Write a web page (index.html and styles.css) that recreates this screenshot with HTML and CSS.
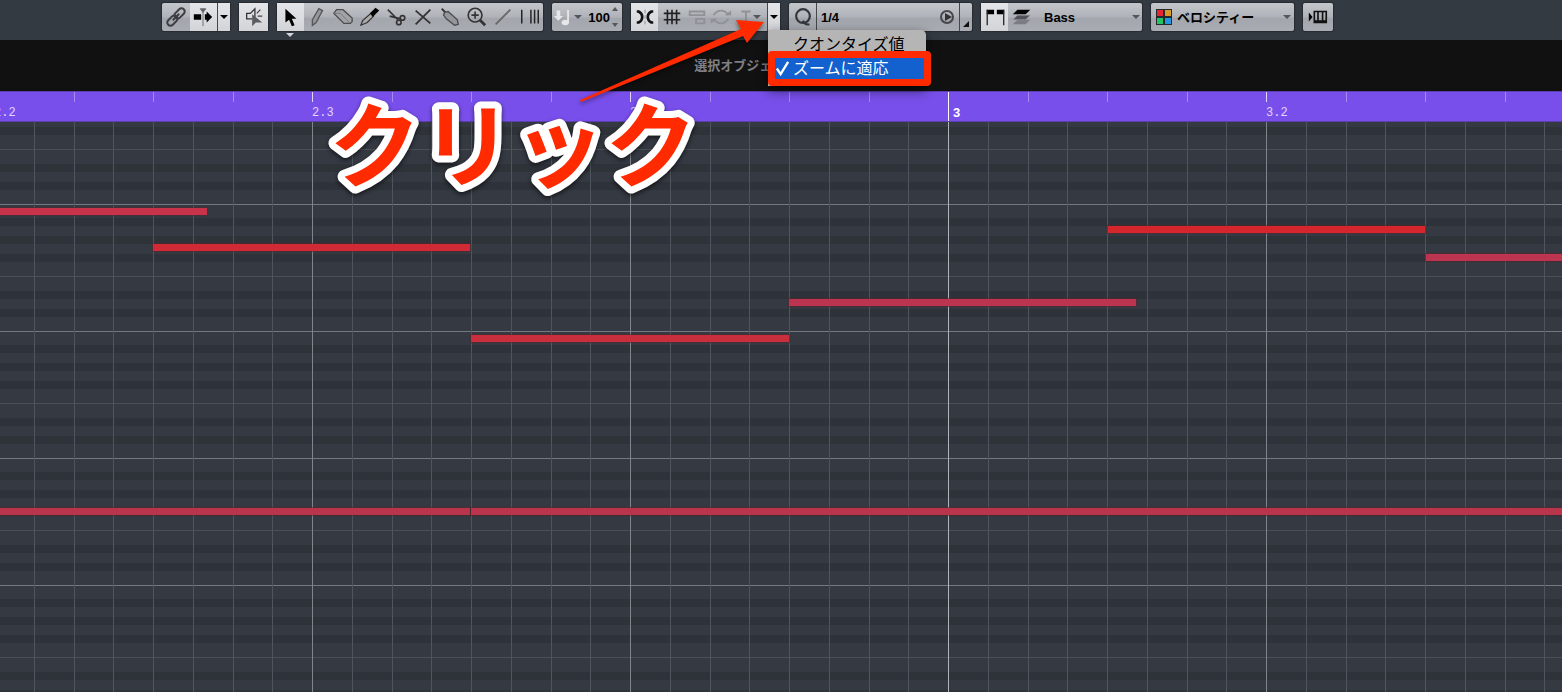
FILE: index.html
```html
<!DOCTYPE html>
<html lang="ja">
<head>
    <meta charset="UTF-8">
    <meta name="viewport" content="width=device-width, initial-scale=1.0">
    <title>キーエディター</title>
    <link rel="stylesheet" href="styles.css">
</head>
<body>

<div class="editor">
    <!-- ツールバー -->
    <div class="toolbar">
        <div class="group group-link">
            <button aria-label="リンク"><svg class="icon" viewBox="0 0 24 24"><g fill="none" stroke="#3c3e42" stroke-width="2.2" transform="rotate(-45 12 12)"><rect x="0" y="8.500" width="13" height="7" rx="3.500"/><rect x="11" y="8.500" width="13" height="7" rx="3.500"/><path d="M7 12h10"/></g></svg></button>
            <button class="on" aria-label="オートスクロール"><svg class="icon" viewBox="0 0 24 24"><path d="M2 9h8v6H2zM14 9h2V6l6 6-6 6v-3h-2z"/><path d="M12 4v18M9 3h6l-3 4z" stroke="#666" fill="#666"/></svg></button>
            <button class="on narrow" aria-label="オートスクロール設定"><span class="caret dark"></span></button>
        </div>

        <div class="group group-speaker">
            <button class="on" aria-label="試聴"><svg class="icon" viewBox="0 0 24 24"><path d="M10 14H4V8h4l5-5v9" fill="none" stroke="#333" stroke-width="1.4"/><path d="M15 8l4-4M16 11h5" fill="none" stroke="#444" stroke-width="1.4"/><path d="M10 9v13l4-4h7z" fill="#5a5c60"/></svg></button>
        </div>

        <div class="group group-tools">
            <button class="on selected" aria-label="選択"><svg class="icon" viewBox="0 0 24 24"><path d="M7 3v15l4-3 3 7 3-1-3-7h5z"/></svg></button>
            <button aria-label="鉛筆"><svg class="icon" viewBox="0 0 24 24"><path d="M7 15L14 3l4 2-7 13-4 3z" fill="#96989c" stroke="#55575b" stroke-width="1.5"/></svg></button>
            <button aria-label="消しゴム"><svg class="icon" viewBox="0 0 24 24"><path d="M2 8l3-4h7l10 9v4l-2 2h-7z" fill="#a0a2a6" stroke="#4a4c50" stroke-width="1.4"/><path d="M2 8h7l10 10" fill="none" stroke="#77797d"/></svg></button>
            <button aria-label="トリム"><svg class="icon" viewBox="0 0 24 24"><path d="M2 21l2-5 9-8 3 3-7 7z" fill="#aaa" stroke="#333" stroke-width="1.3"/><path d="M12 8l6-6 4 3-7 7z"/></svg></button>
            <button aria-label="分割"><svg class="icon" viewBox="0 0 24 24"><g fill="none" stroke="#333" stroke-width="1.8"><path d="M2 4l11 11M4 11l12 3"/><circle cx="18" cy="13" r="2.500"/><circle cx="14" cy="18" r="2.500"/></g></svg></button>
            <button aria-label="ミュート"><svg class="icon" viewBox="0 0 24 24"><path d="M4 5l16 14M20 4L4 20" stroke="#333" stroke-width="2"/></svg></button>
            <button aria-label="のり"><svg class="icon" viewBox="0 0 24 24"><path d="M3 3l4 4" stroke="#333" stroke-width="2"/><path d="M6 7l4-1 10 9 1 5-4 1-9-7-3-4z" fill="#95979b" stroke="#4b4d50" stroke-width="1.5"/></svg></button>
            <button aria-label="ズーム"><svg class="icon" viewBox="0 0 24 24"><g fill="none" stroke="#333" stroke-width="1.8"><circle cx="11" cy="10" r="7.500"/><path d="M7 10h8M11 6v8"/><path d="M16 15l6 6" stroke-width="3"/></g></svg></button>
            <button aria-label="ライン"><svg class="icon" viewBox="0 0 24 24"><path d="M4 20L20 4" stroke="#666" stroke-width="2"/></svg></button>
            <button aria-label="タイムワープ"><svg class="icon" viewBox="0 0 24 24"><path d="M3 4v15M13 4v15M17 4v15M21 4v15" stroke="#222" stroke-width="1.6"/></svg></button>
        </div>

        <div class="group group-velocity">
            <button aria-label="挿入ベロシティー"><svg class="icon" viewBox="0 0 24 24"><path d="M5 5h4v6h3l-5 5-5-5h3z" fill="#e6e7e9"/><path d="M17.500 4v14" stroke="#e6e7e9" stroke-width="2"/><ellipse cx="14.500" cy="18" rx="4" ry="3" fill="#e6e7e9"/></svg></button>
            <span class="caret"></span>
            <input class="velocity" type="text" value="100" aria-label="ベロシティー値">
            <div class="spin">
                <button class="up" aria-label="上げる"></button>
                <button class="down" aria-label="下げる"></button>
            </div>
        </div>

        <div class="group group-snap">
            <button class="on" aria-label="スナップ"><svg class="icon" viewBox="0 0 24 24"><path d="M3 6h2q4 2 4 6t-4 6H3M21 6h-2q-4 2-4 6t4 6h2" fill="none" stroke="#111" stroke-width="2.800"/><path d="M12 4v4M12 10v4M12 16v4" stroke="#888"/></svg></button>
            <button aria-label="グリッド"><svg class="icon" viewBox="0 0 24 24"><path d="M7 4v16M12 4v16M17 4v16M3 8h18M3 15h18" stroke="#222" stroke-width="1.8"/></svg></button>
            <button class="narrower" aria-label="スナップタイプ"><svg class="icon" viewBox="0 0 24 24"><path d="M4 6h16v4H4zM11 14h9v5h-9z" fill="none" stroke="#8f9195" stroke-width="2"/></svg></button>
            <button class="narrower" aria-label="グリッドタイプ"><svg class="icon" viewBox="0 0 24 24"><path d="M4 10q3-5 8-5 5 0 8 5M20 14q-3 5-8 5-5 0-8-5" fill="none" stroke="#8f9195" stroke-width="2"/><path d="M16 10h7v-5zM8 14H1v5z" fill="#8f9195"/></svg></button>
            <button class="grid-type" aria-label="グリッド間隔"><svg class="icon" viewBox="0 0 24 24"><path d="M7 6h10M12 6v12M9 18h6" stroke="#8f9195" stroke-width="2"/></svg><span class="caret"></span></button>
            <button class="on narrow" aria-label="グリッドの種類を開く" aria-expanded="true"><span class="caret dark"></span></button>
            <div class="menu" role="menu">
                <button role="menuitemradio" aria-checked="false">クオンタイズ値</button>
                <button class="checked" role="menuitemradio" aria-checked="true"><svg class="check" viewBox="0 0 16 16"><path d="M2 8l4 6 8-13" fill="none" stroke="#fff" stroke-width="2.500"/></svg>ズームに適応</button>
            </div>
        </div>

        <div class="group group-quantize">
            <button class="quantize" aria-label="クオンタイズ"><svg class="icon" viewBox="0 0 24 24"><g fill="none" stroke="#33363a" stroke-width="2.400"><ellipse cx="12" cy="11" rx="7.500" ry="7.500"/><path d="M12 16q2 5 7 4"/></g></svg></button>
            <button class="preset">1/4<svg class="play" viewBox="0 0 16 16"><circle cx="8" cy="8" r="6" fill="none" stroke="#44474b" stroke-width="2"/><path d="M6 4l7 4-7 4z" fill="#333"/></svg></button>
            <button class="corner" aria-label="クオンタイズパネル"></button>
        </div>

        <div class="group group-part">
            <button class="on" aria-label="パート境界を表示"><svg class="icon" viewBox="0 0 24 24"><path d="M3 4h8v5H3zM14 4h8v5h-8z"/><path d="M3.500 4v17M21.500 4v17" stroke="#222" stroke-width="1.400"/></svg></button>
            <button aria-label="アクティブパートのみ編集"><svg class="icon" viewBox="0 0 24 24"><path d="M7 15h14l-5 5H2z" fill="#7b7d82"/><path d="M7 10h14l-5 5H2z" fill="#515358" stroke="#a9abb0" stroke-width=".5"/><path d="M7 4h14l-5 5H2z"/></svg></button>
            <select class="part-list" aria-label="編集パート"><option>Bass</option></select>
            <span class="caret"></span>
        </div>

        <div class="group group-color">
            <svg class="swatch" viewBox="0 0 16 16"><path d="M0 0h16v16H0z" fill="#25282c"/><path d="M1 1h6v6H1z" fill="#e32632"/><path d="M9 1h6v6H9z" fill="#d99b27"/><path d="M1 9h6v6H1z" fill="#24c466"/><path d="M9 9h6v6H9z" fill="#2295df"/></svg>
            <select class="color-list" aria-label="イベントカラー"><option>ベロシティー</option></select>
            <span class="caret"></span>
        </div>

        <div class="group group-input">
            <button aria-label="ステップ入力"><svg class="icon" viewBox="0 0 24 24"><path d="M2 7l4 5-4 5z"/><path d="M8 6h13v12H8zM12 6v10M17 6v10" fill="none" stroke="#111" stroke-width="1.8"/><path d="M8 17h13" stroke="#111" stroke-width="3"/></svg></button>
        </div>
    </div>

    <!-- 情報ライン -->
    <div class="info-line">選択オブジェクトがありません</div>

    <div class="ruler" id="ruler"></div>
    <div class="roll" id="roll"></div>
</div>

<!-- 説明用の矢印と文字 -->
<svg class="arrow" viewBox="0 0 200 100">
    <path d="M5 85L166 14l-5-9 28 2-17 21-4-7L6 87z"/>
</svg>
<svg class="caption" viewBox="0 0 390 120"><text x="9" y="90">クリック</text></svg>

<script>
    const ruler = document.getElementById('ruler');
    const roll = document.getElementById('roll');

    const bar = 948;      // 3小節目の位置
    const beat = 318;     // 1拍の幅
    const octave = 127;   // 1オクターブの高さ

    const labels = { '-3': '2.2', '-2': '2.3', '-1': '2.4', '0': '3', '1': '3.2' };
    const notes = [
        { x: 0, y: 87, w: 207, color: '#c9334a' },
        { x: 153, y: 123, w: 317, color: '#d02a36' },
        { x: 471, y: 214, w: 318, color: '#c82e3c' },
        { x: 789, y: 178, w: 347, color: '#bb3550' },
        { x: 1108, y: 105, w: 317, color: '#d4262c' },
        { x: 1426, y: 133, w: 400, color: '#bb3550' },
        { x: 0, y: 387, w: 470, color: '#b9354c' },
        { x: 471, y: 387, w: 1400, color: '#b9354c' }
    ];

    function add(parent, className, style, text) {
        const el = document.createElement('div');
        el.className = className;
        Object.assign(el.style, style);
        if (text) el.textContent = text;
        parent.appendChild(el);
    }

    function draw() {
        ruler.innerHTML = '';
        roll.innerHTML = '';
        const width = roll.clientWidth;
        const height = roll.clientHeight;

        // 鍵盤の行 (黒鍵は暗い帯)
        for (let top = -45; top < height; top += octave) {
            [18, 36, 54, 91, 109].forEach(y => add(roll, 'black-key', { top: (top + y - 4) + 'px' }));
            add(roll, 'row-line octave', { top: top + 'px' });
            add(roll, 'row-line', { top: (top + 72) + 'px' });
        }

        // 拍の縦線
        for (let i = -24; bar + i * beat / 8 < width; i++) {
            const x = Math.round(bar + i * beat / 8);
            const type = i === 0 ? ' bar' : i % 8 === 0 ? ' beat' : '';
            add(roll, 'column-line' + type, { left: x + 'px' });
            if (i % 2 === 0) add(ruler, 'tick' + type, { left: x + 'px' });
        }
        for (const i in labels) {
            const x = bar + i * beat;
            add(ruler, i === '0' ? 'label label-bar' : 'label', { left: x + 'px' }, labels[i]);
        }

        notes.forEach(n => add(roll, 'note', {
            left: n.x + 'px', top: (n.y - 1) + 'px', width: n.w + 'px', backgroundColor: n.color
        }));
    }

    window.addEventListener('resize', draw);
    draw();
</script>

</body>
</html>
```

FILE: styles.css
```css
* {
    box-sizing: border-box;
}
body {
    margin: 0;
    background-color: #fff;
    font-family: "Liberation Sans", "Noto Sans CJK JP", sans-serif;
    overflow: hidden;
}
button, input, select {
    font-family: inherit;
    margin: 0;
    padding: 0;
    border: none;
    border-radius: 0;
    background: none;
    color: #000;
    appearance: none;
}
.editor {
    display: flex;
    flex-direction: column;
    height: 100vh;
    margin-right: 2px;
    background-color: #333840;
}

/* ツールバー */
.toolbar {
    display: flex;
    gap: 9px;
    height: 40px;
    padding: 3px 0 9px 162px;
    background-color: #343a42;
}
.group {
    position: relative;
    display: flex;
    flex-shrink: 0;
    align-items: center;
    height: 28px;
    border-radius: 2px;
    background: linear-gradient(#c3c6ca, #b0b3b9 48%, #a3a6ac 56%, #a9acb2);
    box-shadow: 0 0 1px 1px #272b31;
}
.group > button {
    display: flex;
    flex: 1;
    align-items: center;
    justify-content: center;
    height: 28px;
    min-width: 0;
}
.group > button.on {
    background: linear-gradient(#e3e5e8, #d2d4d8);
}
.group > button.narrow {
    flex: 0 0 13px;
    border-left: 1px solid #44474c;
}
.group > button.narrower {
    flex: 0 0 24px;
}
.group > button.grid-type {
    flex: 0 0 34px;
}
.group-link {
    width: 68px;
}
.group-speaker {
    width: 29px;
}
.group-tools {
    width: 266px;
}
.group-velocity {
    width: 70px;
}
.group-snap {
    width: 149px;
}
.group-quantize {
    width: 183px;
}
.group-part {
    width: 161px;
    padding-right: 2px;
}
.group-color {
    width: 143px;
    padding: 0 3px 0 5px;
}
.group-input {
    width: 30px;
}
.icon {
    flex-shrink: 0;
    width: 22px;
    height: 22px;
}
.caret {
    flex-shrink: 0;
    border: 4px solid transparent;
    border-top: 4px solid #54565b;
    border-bottom: none;
}
.caret.dark {
    border-top-color: #000;
}
.selected {
    position: relative;
}
.selected::after {
    content: "";
    position: absolute;
    top: 30px;
    left: 9px;
    border: 4px solid transparent;
    border-top: 4px solid #d2d4d8;
    border-bottom: none;
}
.grid-type .icon {
    margin: 0 -4px;
}
.velocity {
    width: 26px;
    margin: 0 2px 0 2px;
    font-size: 13px;
    font-weight: bold;
    text-align: right;
}
.spin {
    display: flex;
    flex-direction: column;
    gap: 12px;
    padding-right: 4px;
}
.spin button {
    border: 3px solid transparent;
}
.spin .up {
    border-top: none;
    border-bottom: 4px solid #54565b;
}
.spin .down {
    border-bottom: none;
    border-top: 4px solid #54565b;
}
.group > button.quantize {
    flex: 0 0 27px;
}
.group > button.preset {
    justify-content: space-between;
    padding: 0 4px;
    border: 1px solid #44474c;
    border-width: 0 1px;
    font-size: 13px;
    font-weight: bold;
}
.play {
    width: 16px;
    height: 16px;
}
.group > button.corner {
    flex: 0 0 12px;
}
.corner::after {
    content: "";
    margin-top: 14px;
    border-left: 6px solid transparent;
    border-bottom: 6px solid #111;
}
.group-part > button {
    flex: 0 0 27px;
}
.part-list, .color-list {
    flex: 1;
    min-width: 0;
    height: 28px;
    font-size: 13px;
    font-weight: bold;
}
.part-list {
    padding-left: 9px;
}
.swatch {
    width: 16px;
    height: 16px;
}
.color-list {
    padding-left: 5px;
}

/* グリッドの種類メニュー */
.menu {
    position: absolute;
    z-index: 2;
    top: 27px;
    left: 137px;
    width: 158px;
    padding-top: 5px;
    border-radius: 0 5px 0 0;
    background-color: #b5b5b6;
    box-shadow: 0 4px 12px rgba(0, 0, 0, 0.6);
}
.menu button {
    display: block;
    width: 100%;
    height: 20px;
    padding-left: 25px;
    font-size: 16px;
    line-height: 20px;
    text-align: left;
    white-space: nowrap;
}
.menu .checked {
    position: relative;
    width: 163px;
    height: 35px;
    margin-top: -4px;
    padding-left: 18px;
    border: 7px solid #ff2a00;
    border-radius: 4px;
    background-color: #1261ce;
    color: #fff;
}
.check {
    position: absolute;
    top: 3px;
    left: 0;
    width: 15px;
    height: 15px;
}

.info-line {
    height: 51px;
    padding-left: 8px;
    background-color: #111;
    color: #7e7e84;
    font-size: 13px;
    font-weight: bold;
    line-height: 51px;
    text-align: center;
}

/* ルーラー */
.ruler {
    position: relative;
    height: 31px;
    overflow: hidden;
    border-top: 1px solid #5b3fb0;
    border-bottom: 1px solid #5b3fb0;
    background-color: #784fea;
}
.tick {
    position: absolute;
    top: 0;
    width: 1px;
    height: 10px;
    background-color: #a78bf3;
}
.tick.beat {
    background-color: #e0d6ff;
}
.tick.bar {
    height: 30px;
    background-color: #fff;
}
.label {
    position: absolute;
    top: 13px;
    color: #e0d6ff;
    font-family: "Liberation Mono", monospace;
    font-size: 12px;
    line-height: 16px;
}
.label-bar {
    padding-left: 5px;
    color: #fff;
    font-family: "Liberation Sans", sans-serif;
    font-size: 13px;
    font-weight: bold;
}

/* ピアノロール */
.roll {
    position: relative;
    flex: 1;
    overflow: hidden;
    background-color: #343942;
}
.black-key {
    position: absolute;
    width: 100%;
    height: 8px;
    background-color: #2e3239;
}
.row-line {
    position: absolute;
    width: 100%;
    height: 1px;
    background-color: #4b5057;
}
.row-line.octave {
    background-color: #747880;
}
.column-line {
    position: absolute;
    width: 1px;
    height: 100%;
    background-color: #50545c;
}
.column-line.beat {
    background-color: #80848b;
}
.column-line.bar {
    background-color: #b0b3b8;
}
.note {
    position: absolute;
    height: 7px;
    box-shadow: 0 0 1px 1px rgba(90, 35, 45, 0.5);
}

/* 説明用の矢印と文字 */
.arrow {
    position: absolute;
    z-index: 3;
    top: 15px;
    left: 575px;
    width: 200px;
    height: 100px;
    fill: #ff2a00;
    filter: drop-shadow(0 2px 2px rgba(0, 0, 0, 0.5));
    pointer-events: none;
}
.caption {
    position: absolute;
    top: 90px;
    left: 320px;
    width: 390px;
    height: 120px;
    fill: #ff2a00;
    stroke: #fff;
    stroke-width: 14px;
    stroke-linejoin: round;
    paint-order: stroke;
    font-family: "Noto Sans CJK JP", sans-serif;
    font-size: 92px;
    font-weight: 700;
    filter: drop-shadow(0 2px 2px rgba(0, 0, 0, 0.6));
    pointer-events: none;
}
```
